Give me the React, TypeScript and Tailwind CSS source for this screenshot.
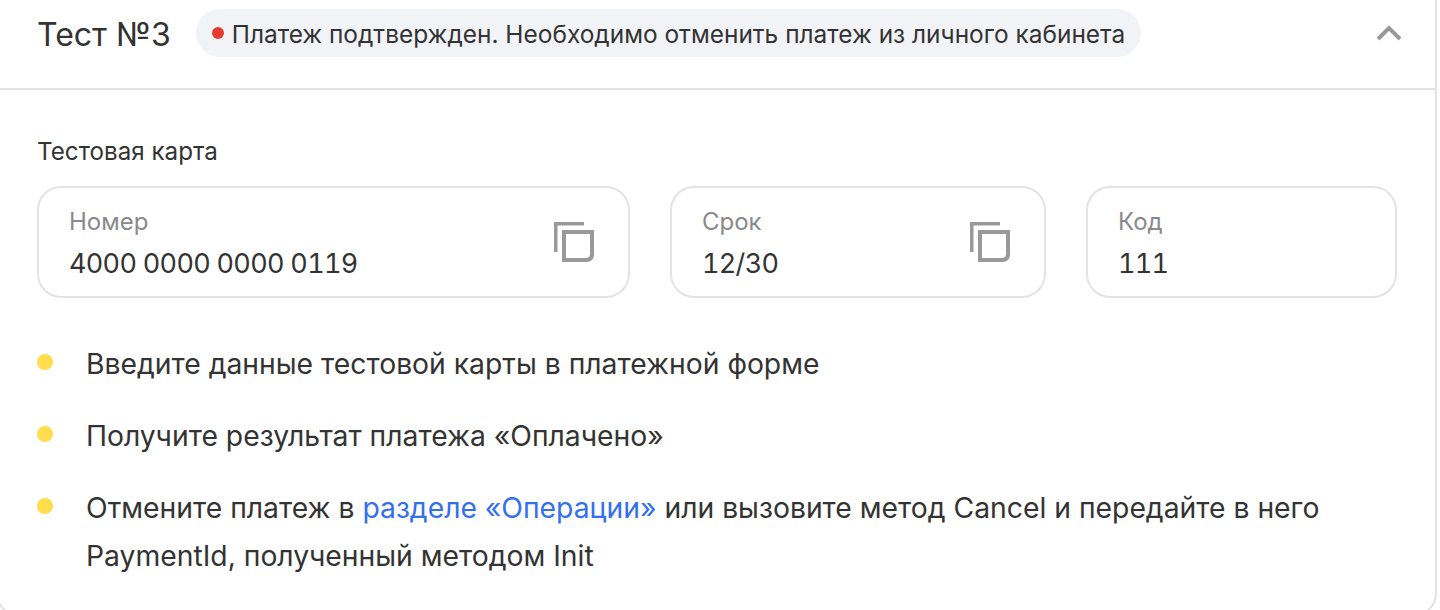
const CopyIcon = () => (
  <svg width="40" height="40" viewBox="0 0 40 40" fill="none" className="shrink-0">
    <path d="M0 0h30v3.5H3.500V30H0z" fill="#999999" />
    <path d="M8 8h32v25a7 7 0 0 1-7 7H8zM12 12v24h20a4 4 0 0 0 4-4V12z" fill="#999999" fillRule="evenodd" />
  </svg>
);

function CardField({ label, value, copy, className }: { label: string; value: string; copy?: boolean; className: string }) {
  return (
    <div className={`flex items-center justify-between h-[112px] rounded-[24px] border-2 border-[#e3e3e3] pl-[30px] pr-[34px] ${className}`}>
      <div className="pt-[3px]">
        <div className="text-[24px] leading-[28px] text-[#8a8a8a]">{label}</div>
        <div className="mt-[12px] text-[27px] leading-[32px] tracking-[-0.7px] tabular-nums text-[#333333]">{value}</div>
      </div>
      {copy && <CopyIcon />}
    </div>
  );
}

function Step({ children }: { children: React.ReactNode }) {
  return (
    <li className="flex">
      <span className="mt-[14px] mr-[33px] w-[16px] h-[16px] shrink-0 rounded-full bg-[#ffdd4d]" />
      <div className="text-[28.300px] leading-[48px] text-[#333333] whitespace-nowrap">{children}</div>
    </li>
  );
}

export default function App() {
  return (
    <div className="w-[1440px] h-[610px] overflow-hidden bg-white" style={{ fontFamily: 'Inter, "Liberation Sans", sans-serif' }}>
      <div className="w-[1441px] h-[617px] ml-[-4px] border-2 border-t-0 border-[#e3e3e3] rounded-b-[24px]">
        <div className="flex items-center h-[90px] pb-[22px] pl-[39px] pr-[33px] border-b-2 border-[#e3e3e3]">
          <h2 className="mt-[4px] text-[32px] leading-[40px] text-[#333333]">Тест №3</h2>
          <div className="flex items-center ml-[25px] h-[48px] rounded-[24px] bg-[#f2f3f7] pl-[16px] pr-[16px]">
            <span className="w-[12px] h-[12px] rounded-full bg-[#e53a2f] mr-[8px]" />
            <span className="pt-[2px] text-[24.450px] leading-[32px] text-[#333333]">Платеж подтвержден. Необходимо отменить платеж из личного кабинета</span>
          </div>
          <svg width="26" height="16" viewBox="0 0 26 16" fill="none" className="ml-auto">
            <path d="M2 14 13 3l11 11" stroke="#999999" strokeWidth="4" />
          </svg>
        </div>
        <div className="pl-[39px] pr-[38px] pt-[46px]">
          <div className="text-[24.200px] leading-[32px] text-[#333333]">Тестовая карта</div>
          <div className="flex gap-[40px] mt-[18px]">
            <CardField className="w-[593px]" label="Номер" value="4000 0000 0000 0119" copy />
            <CardField className="w-[376px]" label="Срок" value="12/30" copy />
            <CardField className="w-[311px]" label="Код" value="111" />
          </div>
          <ul className="flex flex-col gap-[24px] mt-[42px]">
            <Step>Введите данные тестовой карты в платежной форме</Step>
            <Step>Получите результат платежа «Оплачено»</Step>
            <Step>
              Отмените платеж в <a className="text-[#336fee]">разделе «Операции»</a> или вызовите метод Cancel и передайте в него
              <br />
              PaymentId, полученный методом Init
            </Step>
          </ul>
        </div>
      </div>
    </div>
  );
}
